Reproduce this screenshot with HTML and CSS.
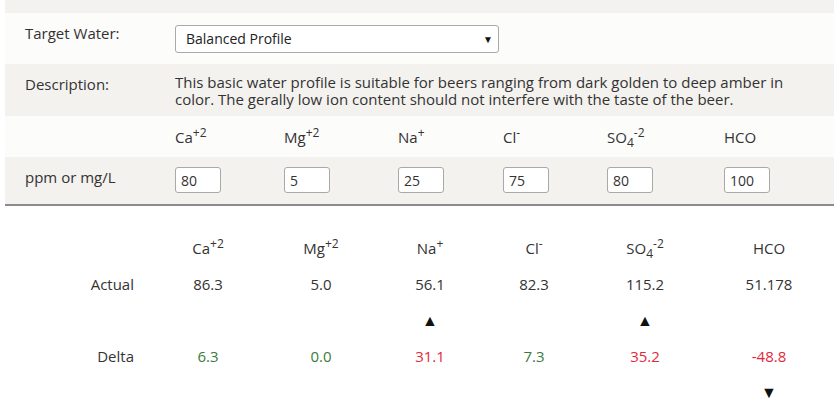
FILE: index.html
```html
<!DOCTYPE html>
<html lang="en">
<head>
  <meta charset="UTF-8" />
  <title>Water Profile</title>
  <meta name="viewport" content="width=device-width,initial-scale=1" />
  <link rel="stylesheet" href="styles.css">
</head>
<body>
  <div class="profile">
    <div class="strip"></div>

    <div class="row light">
      <div class="label">Target Water:</div>
      <div class="wide">
        <div class="select">Balanced Profile<span class="caret">&#9660;</span></div>
      </div>
    </div>

    <div class="row grey">
      <div class="label">Description:</div>
      <div class="wide desc">This basic water profile is suitable for beers ranging from dark golden to deep amber in color. The gerally low ion content should not interfere with the taste of the beer.</div>
    </div>

    <div class="row light ions">
      <div class="label"></div>
      <div class="ion">Ca<sup>+2</sup></div>
      <div class="ion">Mg<sup>+2</sup></div>
      <div class="ion">Na<sup>+</sup></div>
      <div class="ion">Cl<sup>-</sup></div>
      <div class="ion">SO<sub>4</sub><sup>-2</sup></div>
      <div class="ion">HCO</div>
    </div>

    <div class="row grey ions ppm">
      <div class="label">ppm or mg/L</div>
      <div class="ion"><span class="box">80</span></div>
      <div class="ion"><span class="box">5</span></div>
      <div class="ion"><span class="box">25</span></div>
      <div class="ion"><span class="box">75</span></div>
      <div class="ion"><span class="box">80</span></div>
      <div class="ion"><span class="box">100</span></div>
    </div>
  </div>

  <div class="results">
    <div></div>
    <div>Ca<sup>+2</sup></div>
    <div>Mg<sup>+2</sup></div>
    <div>Na<sup>+</sup></div>
    <div>Cl<sup>-</sup></div>
    <div>SO<sub>4</sub><sup>-2</sup></div>
    <div>HCO</div>

    <div class="name">Actual</div>
    <div>86.3</div>
    <div>5.0</div>
    <div>56.1</div>
    <div>82.3</div>
    <div>115.2</div>
    <div>51.178</div>

    <div></div>
    <div></div>
    <div></div>
    <div class="arrow">&#9650;</div>
    <div></div>
    <div class="arrow">&#9650;</div>
    <div></div>

    <div class="name">Delta</div>
    <div class="ok">6.3</div>
    <div class="ok">0.0</div>
    <div class="bad">31.1</div>
    <div class="ok">7.3</div>
    <div class="bad">35.2</div>
    <div class="bad">-48.8</div>

    <div></div>
    <div></div>
    <div></div>
    <div></div>
    <div></div>
    <div></div>
    <div class="arrow">&#9660;</div>
  </div>
</body>
</html>
```

FILE: styles.css
```css
body {
  margin: 0;
  background: #fff;
  font-family: "Open Sans", sans-serif;
  font-size: 15px;
  line-height: 20px;
  color: #333;
}
sup, sub { font-size: 12px; line-height: 0; }
sub { vertical-align: -4px; }

/* Target profile block */
.profile {
  margin-left: 5px;
  border-bottom: 2px solid #8c8c8c;
}
.strip { height: 13px; background: #f3f2ef; }
.row {
  display: grid;
  grid-template-columns: 170px 109px 114px 105px 104px 117px 1fr;
}
.row.light { background: #fcfcfb; }
.row.grey { background: #f3f2ef; }
.label { padding: 10px 0 0 20px; }
.wide { grid-column: 2 / 8; }

.row.light .wide { padding: 12px 0 11px; }
.select {
  position: relative;
  width: 312px;
  height: 26px;
  line-height: 26px;
  padding-left: 10px;
  font-size: 14px;
  background: #fff;
  border: 1px solid #a9a9a9;
  border-radius: 3px;
  color: #222;
}
.caret {
  position: absolute;
  right: 5px;
  top: 0;
  font-size: 10px;
  color: #111;
}

.desc {
  padding: 10px 40px 8px 0;
  line-height: 17px;
}

.ions { height: 41px; }
.ion { padding-top: 11px; }
.ppm { height: 47px; }
.ppm .ion { padding-top: 10px; }
.box {
  display: block;
  width: 39px;
  height: 24px;
  line-height: 26px;
  padding-left: 5px;
  font-size: 14px;
  background: #fff;
  border: 1px solid #a9a9a9;
  border-radius: 3px;
}

/* Actual vs. target table */
.results {
  display: grid;
  grid-template-columns: 150px 116px 110px 108px 100px 122px 126px;
  grid-auto-rows: 36px;
  margin-top: 24px;
  text-align: center;
}
.results > div { padding-top: 8px; }
.results .name { text-align: right; padding-right: 16px; }
.ok { color: #3c7a3c; }
.bad { color: #e2283c; }
.arrow { font-size: 16px; color: #111; }
```
